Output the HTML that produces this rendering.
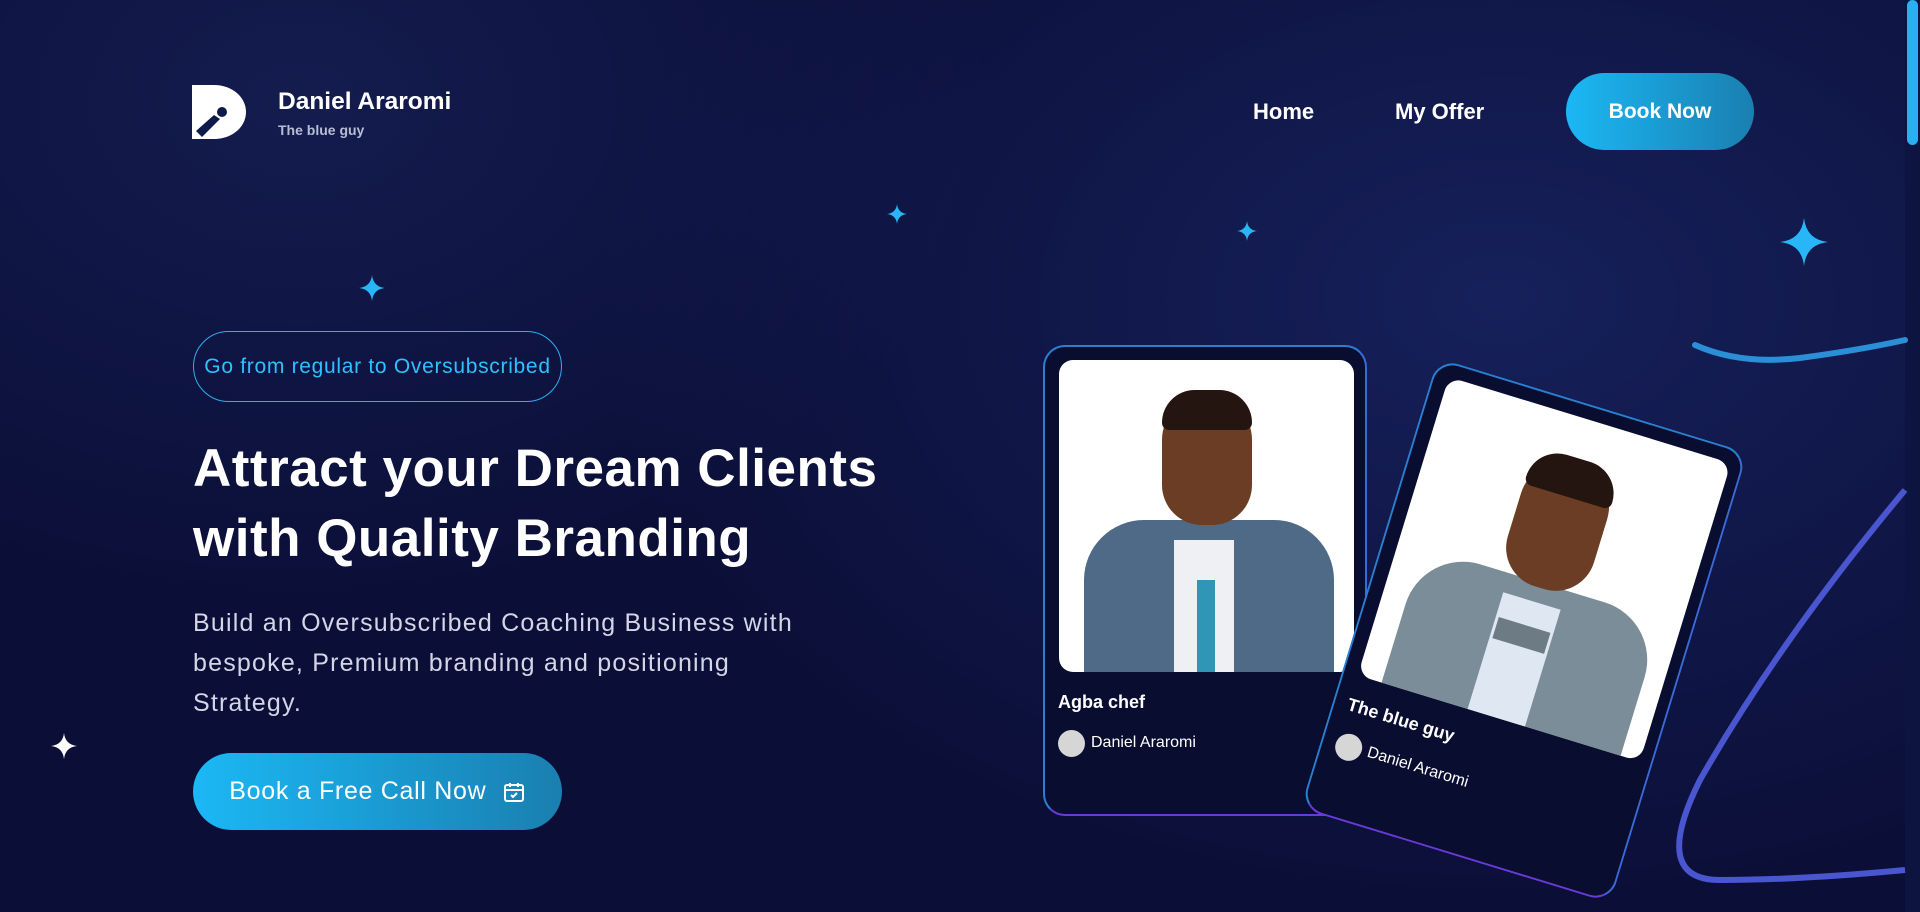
<!DOCTYPE html>
<html><head><meta charset="utf-8"><style>
*{margin:0;padding:0;box-sizing:border-box}
body{width:1920px;height:912px;overflow:hidden;font-family:"Liberation Sans",sans-serif;color:#fff;
background:radial-gradient(ellipse 900px 600px at 1500px 300px,#16205a 0%,rgba(22,32,90,0) 100%),radial-gradient(ellipse 700px 500px at 300px 100px,#141c4f 0%,rgba(20,28,79,0) 100%),#0b0f38;position:relative}
.abs{position:absolute}
.btn{background:linear-gradient(90deg,#1bb8f5,#1a7fb0);border-radius:40px;display:flex;align-items:center;justify-content:center}
.card{position:absolute;width:324px;height:471px;border-radius:22px;background:#090d30;border:2px solid;}
.photo{position:absolute;left:14px;top:13px;width:295px;height:312px;background:#fff;border-radius:14px;overflow:hidden}
</style></head><body>
<div class="abs" style="left:1905px;top:0;width:15px;height:912px;background:#0e1440"></div>
<div class="abs" style="left:1907px;top:0;width:11px;height:145px;background:#2ab0f0;border-radius:6px"></div>

<svg class="abs" style="left:192px;top:85px" width="54" height="54" viewBox="0 0 54 54"><path d="M0 0H22C40 0 54 12 54 27C54 42 40 54 22 54H0Z" fill="#fff"/><path d="M4 46L22 30L28 34L10 52Z" fill="#0f1a4c"/><circle cx="30" cy="27" r="5" fill="#0f1a4c"/></svg>
<div class="abs" style="left:278px;top:88px;font-size:24.5px;font-weight:bold">Daniel Araromi</div>
<div class="abs" style="left:278px;top:122px;font-size:14px;font-weight:bold;color:#b8bdd6">The blue guy</div>

<div class="abs" style="left:1253px;top:99px;font-size:22px;font-weight:bold">Home</div>
<div class="abs" style="left:1395px;top:99px;font-size:22px;font-weight:bold">My Offer</div>
<div class="abs btn" style="left:1566px;top:73px;width:188px;height:77px;font-size:21px;font-weight:bold">Book Now</div>

<svg width="0" height="0"><defs><path id="st" d="M0-10Q1-1 10 0Q1 1 0 10Q-1 1-10 0Q-1-1 0-10Z"/></defs></svg>
<svg class="abs" style="left:0;top:0" width="1920" height="912">
<use href="#st" transform="translate(372,288) scale(1.3)" fill="#29b6f6"/>
<use href="#st" transform="translate(897,214) scale(1)" fill="#29b6f6"/>
<use href="#st" transform="translate(1247,231) scale(1)" fill="#29b6f6"/>
<use href="#st" transform="translate(1804,242) scale(2.4)" fill="#29b6f6"/>
<use href="#st" transform="translate(64,746) scale(1.3)" fill="#fff"/>
<path d="M1695 345Q1740 365 1800 358Q1860 350 1905 340" stroke="#2a8fd6" stroke-width="6" fill="none" stroke-linecap="round"/>
<path d="M1905 490Q1780 640 1700 780Q1650 880 1720 880Q1800 880 1905 870" stroke="#4a56d0" stroke-width="6" fill="none"/>
</svg>

<div class="abs" style="left:193px;top:331px;width:369px;height:71px;border:1.5px solid #2ab0f0;border-radius:36px;color:#2ec0ff;font-size:21px;letter-spacing:0.7px;display:flex;align-items:center;justify-content:center">Go from regular to Oversubscribed</div>
<div class="abs" style="left:193px;top:434px;font-size:53px;font-weight:bold;line-height:70px;letter-spacing:0.5px;white-space:nowrap">Attract your Dream Clients<br>with Quality Branding</div>
<div class="abs" style="left:193px;top:603px;font-size:25px;letter-spacing:1.2px;line-height:40px;color:#d4d6e6;white-space:nowrap">Build an Oversubscribed Coaching Business with<br>bespoke, Premium branding and positioning<br>Strategy.</div>
<div class="abs btn" style="left:193px;top:753px;width:369px;height:77px;font-size:25px;letter-spacing:0.7px">Book a Free Call Now&nbsp;&nbsp;
<svg width="24" height="24" viewBox="0 0 24 24" fill="none" stroke="#fff" stroke-width="2"><rect x="3" y="5" width="18" height="16" rx="2"/><path d="M3 10H21M8 3V7M16 3V7M9 15l2 2 4-4"/></svg></div>

<div class="card" style="left:1043px;top:345px;border-color:#2a7fd0 #3a6ad8 #6a3ad8 #2a7fd0">
 <div class="photo">
  <div class="abs" style="left:25px;top:160px;width:250px;height:200px;background:#4f6a86;border-radius:60px 60px 0 0"></div>
  <div class="abs" style="left:115px;top:180px;width:60px;height:140px;background:#eef0f4"></div>
  <div class="abs" style="left:138px;top:220px;width:18px;height:100px;background:#2f96b6"></div>
  <div class="abs" style="left:103px;top:35px;width:90px;height:130px;background:#6b3d24;border-radius:45px 45px 40px 40px"></div>
  <div class="abs" style="left:103px;top:30px;width:90px;height:40px;background:#241510;border-radius:45px 45px 10px 10px"></div>
 </div>
 <div class="abs" style="left:13px;top:345px;font-size:18px;font-weight:bold">Agba chef</div>
 <div class="abs" style="left:13px;top:383px;width:27px;height:27px;border-radius:50%;background:#d6d6d6"></div>
 <div class="abs" style="left:46px;top:387px;font-size:16px">Daniel Araromi</div>
</div>
<div class="card" style="left:1362px;top:395px;transform:rotate(17deg);border-color:#2a7fd0 #3a6ad8 #6a3ad8 #2a7fd0">
 <div class="photo">
  <div class="abs" style="left:25px;top:170px;width:250px;height:200px;background:#7a8d98;border-radius:60px 60px 0 0"></div>
  <div class="abs" style="left:115px;top:190px;width:60px;height:140px;background:#dfe8f2"></div>
  <div class="abs" style="left:118px;top:215px;width:54px;height:22px;background:#6c7b84"></div>
  <div class="abs" style="left:103px;top:45px;width:90px;height:130px;background:#6b3d24;border-radius:45px 45px 40px 40px"></div>
  <div class="abs" style="left:103px;top:40px;width:90px;height:40px;background:#241510;border-radius:45px 45px 10px 10px"></div>
 </div>
 <div class="abs" style="left:13px;top:345px;font-size:18px;font-weight:bold">The blue guy</div>
 <div class="abs" style="left:13px;top:383px;width:27px;height:27px;border-radius:50%;background:#d6d6d6"></div>
 <div class="abs" style="left:46px;top:387px;font-size:16px">Daniel Araromi</div>
</div>
</body></html>
